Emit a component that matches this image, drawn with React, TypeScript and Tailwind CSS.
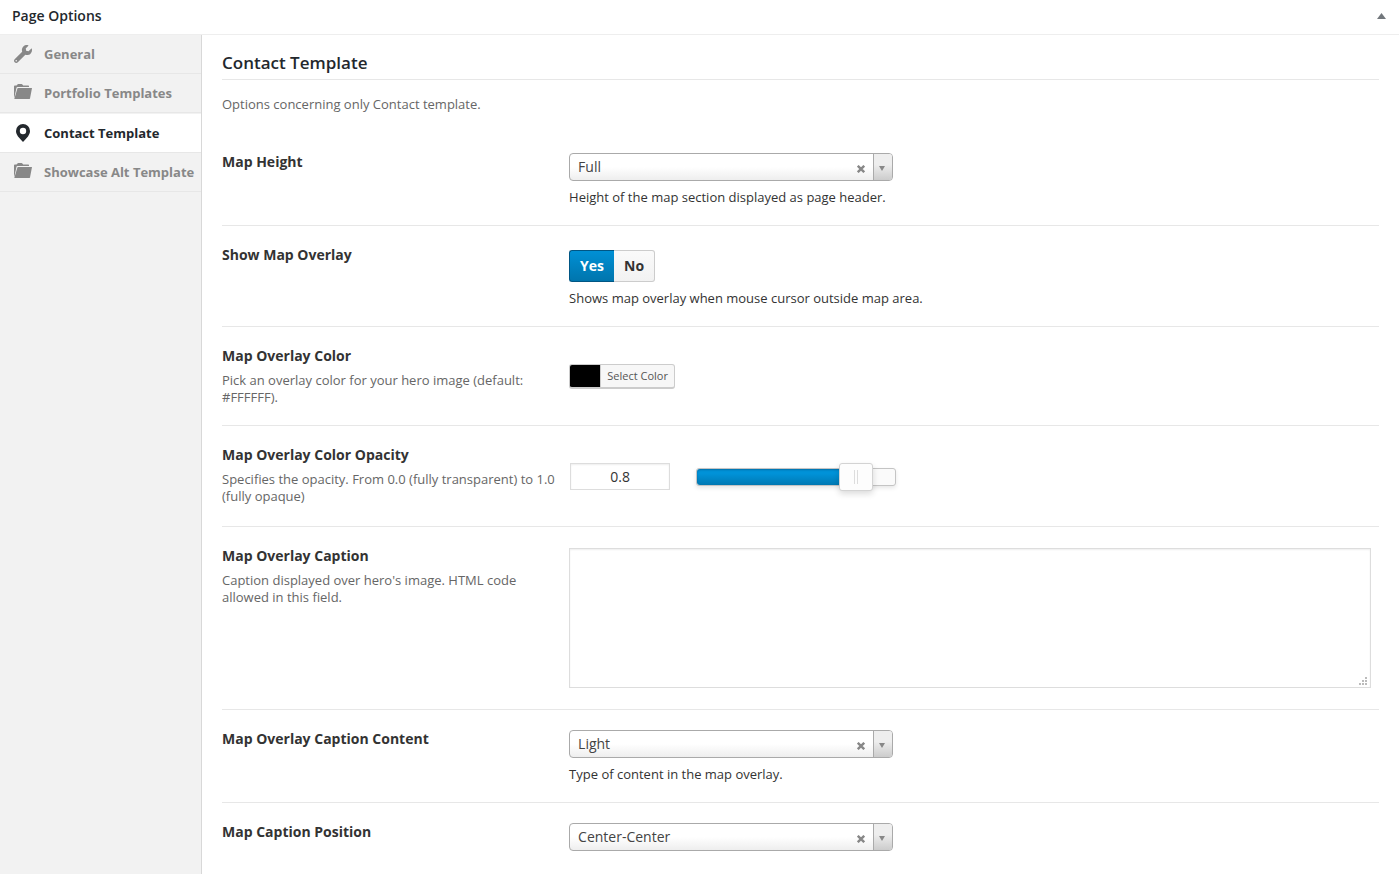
import { useState, type ReactNode } from 'react';
import { FaWrench } from 'react-icons/fa';

function FolderIcon() {
  return (
    <svg viewBox="0 0 18 18" className="h-[18px] w-[18px]" fill="currentColor" aria-hidden="true">
      <path d="M0 14V2.500Q0 1.600.8 1.600H2.600L3.400.4Q3.700 0 4.200 0H7.600Q8.100 0 8.400.4L9.200 1.600H14.400Q15 1.600 15 2.200V3H3.400Q2.700 3 2.500 3.700L.6 12.500Z" />
      <path d="M4 4H18L16 14.600Q15.900 15 15.500 15H.3L3.400 4.500Q3.500 4 4 4Z" />
    </svg>
  );
}

function PinIcon() {
  return (
    <svg viewBox="0 0 14 18" className="h-[18px] w-[14px]" fill="currentColor" aria-hidden="true">
      <path
        fillRule="evenodd"
        d="M7 0a7 7 0 0 1 7 7c0 2-.8 3.600-2 5.400L7.500 17.600q-.5.500-1 0L2 12.400C.8 10.600 0 9 0 7a7 7 0 0 1 7-7Zm0 3.800a3.200 3.200 0 1 0 0 6.400 3.200 3.200 0 0 0 0-6.400Z"
      />
    </svg>
  );
}

const tabs = [
  { label: 'General', icon: <FaWrench size={18} /> },
  { label: 'Portfolio Templates', icon: <FolderIcon /> },
  { label: 'Contact Template', icon: <PinIcon />, active: true },
  { label: 'Showcase Alt Template', icon: <FolderIcon /> },
];

function Field({
  id,
  label,
  hint,
  children,
}: {
  id: string;
  label: string;
  hint?: string;
  children: ReactNode;
}) {
  return (
    <div className="flex border-b border-[#e7e7e7] pt-5 pb-[19px] last:border-b-0">
      <div className="w-[30%] shrink-0 pr-3">
        <label htmlFor={id} className="block text-sm leading-[18px] font-bold text-[#333]">
          {label}
        </label>
        {hint && <p className="mt-[7px] text-[13px] leading-[17px] text-[#666]">{hint}</p>}
      </div>
      <div className="min-w-0 flex-1">{children}</div>
    </div>
  );
}

function SelectBox({ id, options }: { id: string; options: string[] }) {
  const [value, setValue] = useState(options[0]);
  return (
    <div className="relative h-7 w-[324px] max-w-full overflow-hidden rounded border border-[#aaa] bg-linear-to-t from-[#eee] to-white to-50%">
      <div className="pointer-events-none absolute inset-y-0 right-0 flex w-[19px] items-center justify-center border-l border-[#aaa] bg-linear-to-t from-[#ccc] to-[#eee] to-60% pr-0.5">
        <svg viewBox="0 0 6 5" className="mt-0.5 h-[5px] w-[6px]" fill="#888" aria-hidden="true">
          <path d="M0 0H6L3 5Z" />
        </svg>
      </div>
      <select
        id={id}
        value={value}
        onChange={(e) => setValue(e.target.value)}
        className="relative block h-[26px] w-full appearance-none bg-transparent pr-12 pl-2 text-sm leading-[26px] text-[#444] outline-none"
      >
        <option value="" />
        {options.map((o) => (
          <option key={o}>{o}</option>
        ))}
      </select>
      <button
        type="button"
        aria-label="Clear selection"
        onClick={() => setValue('')}
        className="absolute top-[11px] right-[27px] h-2 w-2 text-[#888]"
      >
        <svg viewBox="0 0 8 8" className="block h-2 w-2" stroke="currentColor" strokeWidth="2.4" aria-hidden="true">
          <path d="M.8.8 7.200 7.200M7.200.8.8 7.200" />
        </svg>
      </button>
    </div>
  );
}

function Note({ children }: { children: ReactNode }) {
  return <p className="mt-2 text-[13px] leading-[17px] text-[#333]">{children}</p>;
}

function Switch({ id }: { id: string }) {
  const [on, setOn] = useState(true);
  const onStyle = 'border-[#005684] bg-linear-to-b from-[#0090d5] to-[#0075ad] text-white';
  const offStyle = 'border-[#ccc] bg-linear-to-b from-[#fafafa] to-[#f2f2f2] text-[#333]';
  return (
    <div className="flex text-sm font-bold">
      <button
        id={id}
        type="button"
        aria-pressed={on}
        onClick={() => setOn(true)}
        className={`h-8 w-[45px] rounded-l-[3px] border border-r-0 ${on ? onStyle : offStyle}`}
      >
        Yes
      </button>
      <button
        type="button"
        aria-pressed={!on}
        onClick={() => setOn(false)}
        className={`h-8 w-[41px] rounded-r-[3px] border border-l-0 ${on ? offStyle : onStyle}`}
      >
        No
      </button>
    </div>
  );
}

function OpacityControl({ id }: { id: string }) {
  const [value, setValue] = useState('0.8');
  const percent = Math.min(100, Math.max(0, (Number(value) || 0) * 100));
  return (
    <div className="flex items-center py-[17px] pl-px">
      <input
        id={id}
        type="text"
        value={value}
        onChange={(e) => setValue(e.target.value)}
        className="h-[27px] w-[100px] border border-[#ddd] bg-white text-center text-sm text-[#333] shadow-[inset_0_1px_2px_rgba(0,0,0,0.07)] outline-none"
      />
      <div className="relative ml-[26px] h-[18px] w-[200px] rounded-[3px] border border-[#c4c4c4] bg-[#fafafa] shadow-[0_2px_4px_rgba(0,0,0,0.1)]">
        <div
          className="h-full rounded-l-[3px] bg-linear-to-b from-[#0092d8] from-30% to-[#0079b3] shadow-[inset_0_1px_2px_rgba(0,60,100,0.4)]"
          style={{ width: `${percent}%` }}
        />
        <div
          className="absolute -top-1.5 -ml-4 flex h-7 w-[34px] items-center justify-center gap-0.5 rounded-[3px] border border-[#d3d3d3] bg-[#fdfdfd] shadow-[0_3px_6px_rgba(0,0,0,0.14)]"
          style={{ left: `${percent}%` }}
        >
          <span className="h-3.5 w-px bg-[#ddd]" />
          <span className="h-3.5 w-px bg-[#ddd]" />
        </div>
        <input
          type="range"
          min="0"
          max="1"
          step="0.1"
          aria-label="Map Overlay Color Opacity"
          value={Number(value) || 0}
          onChange={(e) => setValue(e.target.value)}
          className="absolute inset-0 h-full w-full cursor-pointer opacity-0"
        />
      </div>
    </div>
  );
}

export default function App() {
  return (
    <div className="flex min-h-screen flex-col bg-white font-['Open_Sans',sans-serif] text-[#333]">
      <header className="flex h-[35px] items-center justify-between border-b border-[#eee] pr-[13px] pb-0.5 pl-3">
        <h2 className="text-sm font-semibold text-[#23282d]">Page Options</h2>
        <button type="button" aria-label="Toggle panel" className="text-[#72777c]">
          <svg viewBox="0 0 9 6" className="block h-1.5 w-[9px]" fill="currentColor" aria-hidden="true">
            <path d="M0 6 4.500 0 9 6Z" />
          </svg>
        </button>
      </header>
      <div className="flex flex-1">
        <nav className="w-[202px] shrink-0 border-r border-[#d8d8d8] bg-[#f2f2f2]">
          <ul>
            {tabs.map((t) => (
              <li key={t.label}>
                <a
                  href="#"
                  className={`flex h-[39px] items-center border-b border-[#e7e7e7] pl-3.5 text-[13px] font-bold whitespace-nowrap ${
                    t.active ? 'mt-px bg-white text-[#23282d]' : 'text-[#888]'
                  }`}
                >
                  <span className="mr-3 flex w-[18px] justify-center">{t.icon}</span>
                  <span className="pt-0.5">{t.label}</span>
                </a>
              </li>
            ))}
          </ul>
        </nav>
        <main className="min-w-0 flex-1 px-5">
          <h3 className="border-b border-[#e7e7e7] pt-4 pb-1 text-[17px] leading-6 font-semibold text-[#23282d]">
            Contact Template
          </h3>
          <p className="mt-4 mb-5 text-[13px] leading-[17px] text-[#666]">
            Options concerning only Contact template.
          </p>
          <form>
            <Field id="map-height" label="Map Height">
              <SelectBox id="map-height" options={['Full', 'Half']} />
              <Note>Height of the map section displayed as page header.</Note>
            </Field>
            <Field id="map-overlay" label="Show Map Overlay">
              <div className="pt-1">
                <Switch id="map-overlay" />
                <Note>Shows map overlay when mouse cursor outside map area.</Note>
              </div>
            </Field>
            <Field
              id="overlay-color"
              label="Map Overlay Color"
              hint="Pick an overlay color for your hero image (default: #FFFFFF)."
            >
              <div className="pt-[17px]">
                <button
                  id="overlay-color"
                  type="button"
                  className="flex h-[25px] w-[106px] overflow-hidden rounded-[3px] border border-b-2 border-[#ccc] bg-[#f7f7f7] text-[11px] leading-[22px] text-[#555]"
                >
                  <span className="w-[30px] self-stretch bg-black" />
                  <span className="flex-1 border-l border-[#ccc] text-center">Select Color</span>
                </button>
              </div>
            </Field>
            <Field
              id="overlay-opacity"
              label="Map Overlay Color Opacity"
              hint="Specifies the opacity. From 0.0 (fully transparent) to 1.0 (fully opaque)"
            >
              <OpacityControl id="overlay-opacity" />
            </Field>
            <Field
              id="overlay-caption"
              label="Map Overlay Caption"
              hint="Caption displayed over hero's image. HTML code allowed in this field."
            >
              <div className="pt-px pr-2 pb-0.5">
                <div className="relative">
                  <textarea
                    id="overlay-caption"
                    className="block h-[140px] w-full resize-none border border-[#ddd] bg-white p-2 text-sm shadow-[inset_0_1px_2px_rgba(0,0,0,0.07)] outline-none"
                  />
                  <svg
                    viewBox="0 0 8 8"
                    className="pointer-events-none absolute right-1 bottom-[3px] h-2 w-2"
                    fill="#bbb"
                    aria-hidden="true"
                  >
                    <path d="M6 0h2v2H6zM3 3h2v2H3zM6 3h2v2H6zM0 6h2v2H0zM3 6h2v2H3zM6 6h2v2H6z" />
                  </svg>
                </div>
              </div>
            </Field>
            <Field id="caption-content" label="Map Overlay Caption Content">
              <SelectBox id="caption-content" options={['Light', 'Dark']} />
              <Note>Type of content in the map overlay.</Note>
            </Field>
            <Field id="caption-position" label="Map Caption Position">
              <SelectBox id="caption-position" options={['Center-Center', 'Top-Left', 'Bottom-Right']} />
            </Field>
          </form>
        </main>
      </div>
    </div>
  );
}
